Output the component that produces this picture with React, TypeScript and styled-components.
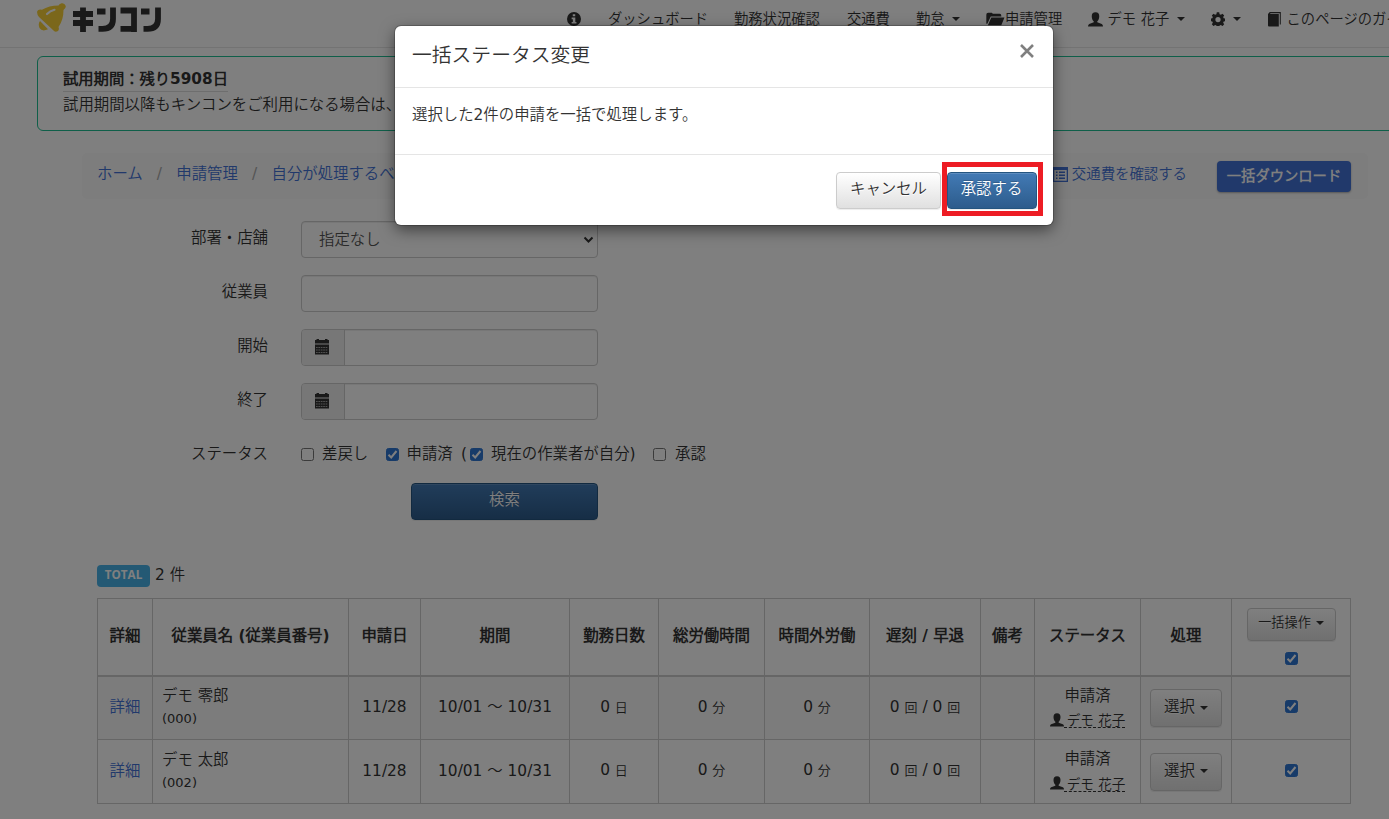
import React from 'react';
import styled, { createGlobalStyle, css } from 'styled-components';

const fonts = '"DejaVu Sans", "Noto Sans CJK JP DemiLight", "Noto Sans CJK JP", sans-serif';

const GlobalStyle = createGlobalStyle`
  * { box-sizing: border-box; }
  body { margin: 0; overflow: hidden; background: #fff; color: #333; font: 15.4px/22px ${fonts}; }
  button, select, input { font: inherit; color: inherit; }
`;

const Page = styled.div`
  position: relative;
  width: 1389px;
  height: 819px;
  overflow: hidden;
  background: #fff;
`;

const Navbar = styled.header`
  display: flex;
  height: 48px;
  border-bottom: 1px solid #e7e7e7;
  white-space: nowrap;
`;
const Brand = styled.div`
  flex: none;
  width: 530px;
  padding: 3px 0 0 36px;
`;
const NavItem = styled.a<{ $w: number; $indent?: number }>`
  flex: none;
  display: flex;
  align-items: center;
  width: ${(p) => p.$w}px;
  height: 38px;
  padding-left: ${(p) => p.$indent ?? 0}px;
  font-size: 14.3px;
  color: #333;
`;
const Glyph = styled.svg<{ $s?: number }>`
  flex: none;
  display: block;
  width: ${(p) => p.$s ?? 16}px;
  height: ${(p) => p.$s ?? 16}px;
  fill: currentColor;
`;
const Caret = styled.i`
  display: inline-block;
  margin-left: 7.5px;
  vertical-align: middle;
  border-top: 4px solid currentColor;
  border-left: 4px solid transparent;
  border-right: 4px solid transparent;
`;

const Trial = styled.section`
  width: 1400px;
  height: 75px;
  margin: 8px 0 0 37px;
  padding: 11px 25px;
  border: 1px solid #1fbf92;
  border-radius: 6px;
`;
const TrialTitle = styled.strong`
  display: table;
  height: 24px;
  border-bottom: 1px solid #ddd;
  font-size: 15.3px;
`;
const TrialText = styled.p`
  margin: 2px 0 0;
`;

const Crumbs = styled.nav`
  display: flex;
  align-items: center;
  width: 1286px;
  height: 46px;
  margin: 22px 0 0 82px;
  padding: 0 17px 4px 15px;
  border-radius: 5px;
  background: #fafafa;
  white-space: nowrap;
`;
const Link = styled.a`
  color: #4272d7;
`;
const Slash = styled.span`
  width: 33.6px;
  padding-left: 14px;
  color: #aaa;
`;
const CrumbActions = styled.div`
  display: flex;
  align-items: center;
  margin-left: auto;
`;
const ExpenseLink = styled(Link)`
  display: flex;
  align-items: center;
  gap: 4px;
  margin-right: 30px;
  font-size: 14.4px;
`;
const Download = styled.button`
  width: 134px;
  height: 31px;
  margin-top: 5px;
  padding: 0 0 1px;
  border: 0;
  border-radius: 4px;
  background: #4272d7;
  box-shadow: 0 1px 2px rgba(0, 0, 0, 0.3);
  color: #fff;
  font-size: 14.3px;
  font-weight: bold;
`;

const Form = styled.form`
  display: flex;
  flex-direction: column;
  gap: 17px;
  margin-top: 22px;
`;
const Row = styled.div`
  display: flex;
  height: 37px;
`;
const Label = styled.label`
  width: 268px;
  margin-right: 33px;
  padding-top: 6px;
  text-align: right;
`;
const field = css`
  border: 1px solid #ccc;
  border-radius: 4px;
  background: #fff;
  box-shadow: inset 0 1px 1px rgba(0, 0, 0, 0.075);
`;
const Select = styled.div`
  ${field}
  display: flex;
  align-items: center;
  justify-content: space-between;
  width: 297px;
  padding: 1px 3px 0 17px;
  color: #555;
`;
const SelectArrow = styled.svg`
  width: 11px;
  height: 8px;
  margin-bottom: 1px;
`;
const Input = styled.input`
  ${field}
  width: 297px;
`;
const DateGroup = styled.div`
  ${field}
  display: flex;
  width: 297px;
  overflow: hidden;
`;
const Addon = styled.span`
  display: flex;
  align-items: center;
  justify-content: center;
  width: 43px;
  padding: 0 2px 2px 0;
  border-right: 1px solid #ccc;
  background: #eee;
`;
const CheckLine = styled.div`
  display: flex;
  padding-top: 6px;
  white-space: nowrap;
`;
const Check = styled.label<{ $w: number; $gap?: number }>`
  display: flex;
  gap: ${(p) => p.$gap ?? 8}px;
  width: ${(p) => p.$w}px;
`;
const Paren = styled.span`
  width: 1px;
`;
const Box = styled.span<{ $on?: boolean; $top?: number }>`
  flex: none;
  display: inline-flex;
  width: 13px;
  height: 13px;
  margin-top: ${(p) => p.$top ?? 5}px;
  border: 1px solid ${(p) => (p.$on ? '#2f76d2' : '#767676')};
  border-radius: 2.5px;
  background: ${(p) => (p.$on ? '#2f76d2' : '#fff')};
`;

const primary = css`
  border: 1px solid #245580;
  border-radius: 4px;
  background: linear-gradient(#427ab5, #2d5c8c);
  box-shadow: inset 0 1px 0 rgba(255, 255, 255, 0.15), 0 1px 1px rgba(0, 0, 0, 0.075);
  color: #fff;
  text-shadow: 0 -1px 0 rgba(0, 0, 0, 0.2);
`;
const Search = styled.button`
  ${primary}
  width: 187px;
  height: 37px;
  margin: -8px 0 0 411px;
  padding: 0 0 3px;
`;

const Total = styled.div`
  display: flex;
  align-items: center;
  height: 22px;
  margin: 45px 0 11px 97px;
`;
const Count = styled.span`
  margin-top: -2px;
`;
const Badge = styled.span`
  width: 53px;
  height: 22px;
  margin-right: 5px;
  border-radius: 4px;
  background: #49b3e8;
  color: #fff;
  font: bold 11.7px/18px "Open Sans", ${fonts};
  text-align: center;
`;

const Table = styled.table`
  width: 1254px;
  margin-left: 97px;
  table-layout: fixed;
  border-collapse: separate;
  border-spacing: 0;
  border: solid #ccc;
  border-width: 1px 0 0 1px;
  white-space: nowrap;
`;
const Tr = styled.tr<{ $h: number; $striped?: boolean }>`
  height: ${(p) => p.$h}px;
  background: ${(p) => (p.$striped ? '#f9f9f9' : '#fff')};
`;
const cell = css`
  padding: 0;
  border: solid #ccc;
  border-width: 0 1px 1px 0;
  text-align: center;
  vertical-align: middle;
`;
const Th = styled.th<{ $lift?: number }>`
  ${cell}
  border-bottom-width: 2px;
  padding-bottom: ${(p) => p.$lift ?? 3}px;
`;
const Td = styled.td<{ $left?: boolean; $lift?: number }>`
  ${cell}
  padding-bottom: ${(p) => p.$lift ?? 2}px;
  ${(p) => p.$left && 'text-align: left; padding-left: 9px;'}
`;
const Small = styled.small`
  font-size: 13px;
`;
const Person = styled.div`
  display: flex;
  justify-content: center;
  align-items: center;
  height: 24px;
  margin-top: 1px;
  font-size: 13.6px;
`;
const PersonName = styled.span`
  height: 17px;
  padding-left: 3px;
  border-bottom: 1px dashed #333;
  line-height: 18px;
`;
const MenuButton = styled.button<{ $small?: boolean }>`
  width: ${(p) => (p.$small ? 89 : 72)}px;
  height: ${(p) => (p.$small ? 33 : 38)}px;
  padding: 0 0 ${(p) => (p.$small ? 3 : 2)}px;
  border: 1px solid #ccc;
  border-radius: 4px;
  background: linear-gradient(#fff, #e0e0e0);
  box-shadow: inset 0 1px 0 rgba(255, 255, 255, 0.15), 0 1px 1px rgba(0, 0, 0, 0.075);
  text-shadow: 0 1px 0 #fff;
  font-size: ${(p) => (p.$small ? 13.2 : 15.4)}px;
  font-weight: ${(p) => (p.$small ? 500 : 400)};
  ${Caret} { margin-left: 5px; }
`;
const HeadActions = styled.div`
  display: flex;
  flex-direction: column;
  align-items: center;
`;

const Backdrop = styled.div`
  position: absolute;
  inset: 0;
  display: flex;
  align-items: flex-start;
  padding: 26px 0 0 395px;
  background: rgba(0, 0, 0, 0.5);
`;
const Dialog = styled.section`
  width: 658px;
  height: 199px;
  border-radius: 6px;
  background: #fff;
  box-shadow: 0 0 0 1px rgba(0, 0, 0, 0.2), 0 5px 15px rgba(0, 0, 0, 0.5);
`;
const DialogHead = styled.div`
  display: flex;
  justify-content: space-between;
  height: 62px;
  padding: 18px 19px 0 17px;
  border-bottom: 1px solid #e5e5e5;
`;
const DialogTitle = styled.h4`
  margin: 0;
  font-size: 19.8px;
  font-weight: 400;
  line-height: 24px;
`;
const DialogBody = styled.div`
  height: 67px;
  padding: 16px 17px;
  border-bottom: 1px solid #e5e5e5;
`;
const DialogFoot = styled.div`
  display: flex;
  justify-content: flex-end;
  align-items: flex-start;
  padding: 7px 10px 0 0;
`;
const Cancel = styled(MenuButton)`
  width: 105px;
  height: 37px;
  margin: 10px 1px 0 0;
  padding-bottom: 3px;
`;
const Highlight = styled.div`
  width: 101px;
  height: 54px;
  border: 5px solid #ed1c24;
`;
const Approve = styled.button`
  ${primary}
  display: block;
  width: 90px;
  height: 37px;
  margin: 5px 0 0;
  padding: 0 1px 4px 0;
`;

const Logo = () => (
  <svg width="126" height="34" viewBox="0 0 126 34">
    <g fill="#f6cf36">
      <path d="M1.300 8 Q0.500 11 3 14 L17 27 Q19 30 22 28 Q23.500 26.500 22.500 24 Q27.500 17 27.500 7 Q30 5.500 29.800 3 Q28.500-.3 25.500.3 Q23 1 22.500 2.500 Q13 2.500 6 6.800 Q2.500 5.800 1.300 8Z" />
      <path d="M4 18 L12 26.300 Q6 29 3.500 25 Q1.800 21 4 18Z" />
    </g>
    <path d="M11 11 Q14 8 18.500 6.800" fill="none" stroke="#fff" strokeWidth="2.200" strokeLinecap="round" />
    <g fill="none" stroke="#333" strokeWidth="5.800">
      <path d="M37 11H57M37 20H57M47 4.500V29" />
      <path d="M61 8.500H69.500M77 4.500V16Q77 25.800 66.500 25.800H62.500" />
      <path d="M84.500 7.500H98V29M84.500 25.800H99" />
      <path d="M105 8.500H113.500M122 4.500V16Q122 25.800 111.500 25.800H107.500" />
    </g>
  </svg>
);

const InfoIcon = () => (
  <Glyph viewBox="0 0 16 16" $s={14}>
    <path fillRule="evenodd" d="M8 0a8 8 0 100 16A8 8 0 008 0zM6.600 2.600h2.800v2.300H6.600zM5.300 6.400h4.200v5h1.300v1.800H5.300v-1.800h1.400V8.200H5.300z" />
  </Glyph>
);
const FolderIcon = () => (
  <Glyph viewBox="0 0 18 18" $s={19}>
    <path d="M.3 13V4.500q0-2 1.700-2h3.500l1 1h6.500q1.500 0 1.500 2v.6H4.500L1.300 13zM5 7H17.500L14.500 14.500H1.800z" />
  </Glyph>
);
const UserIcon = ({ s = 15 }: { s?: number }) => (
  <Glyph viewBox="0 0 16 16" $s={s}>
    <path d="M8 .3c2.800 0 4 1.700 4 4.200 0 2.200-.8 4.400-2.100 5.400v1.100l4.800 1.800q1.300.6 1.300 2.700H0q0-2.100 1.300-2.700l4.800-1.800V9.900C4.800 8.900 4 6.700 4 4.500 4 2 5.200.3 8 .3z" />
  </Glyph>
);
const GearIcon = () => (
  <Glyph viewBox="0 0 16 16" $s={14}>
    <path fillRule="evenodd" d="M6.600.3h2.800l.4 2.200 1.500.6 1.800-1.200 2 2-1.200 1.800.6 1.500 2.200.4v2.800l-2.200.4-.6 1.500 1.200 1.800-2 2-1.800-1.200-1.500.6-.4 2.200H6.600l-.4-2.200-1.500-.6-1.800 1.200-2-2 1.200-1.800-.6-1.500-2.200-.4V7.600l2.200-.4.6-1.500L.9 3.900l2-2 1.800 1.200 1.500-.6zM8 5.600a3 3 0 100 6 3 3 0 000-6z" />
  </Glyph>
);
const BookIcon = () => (
  <Glyph viewBox="0 0 15 15" $s={15}>
    <path d="M1 2L2.800 0H13.800V12.500h-1V1.200H3.600L2.900 2h8.900v12.500H2q-1 0-1-1z" />
  </Glyph>
);
const CalendarIcon = () => (
  <Glyph viewBox="0 0 15 16" $s={16}>
    <path d="M.5 1h1.500V0h2.500v1h6V0H13v1h1.500v3.600H.5zM.5 5.400h14V15.500H.5z" />
    <path d="M1.500 8.500H13.500M1.500 11H13.500M1.500 13.500H13.500" stroke="#eee" strokeWidth=".6" strokeDasharray="1.700 .7" />
  </Glyph>
);
const ListIcon = () => (
  <Glyph viewBox="0 0 15 15" $s={15}>
    <path fillRule="evenodd" d="M0 0h15v15H0zM1.300 3v10.700h12.400V3zM3 4.500h1.500V6H3zm3 0h6V6H6zM3 7.500h1.500V9H3zm3 0h6V9H6zM3 10.500h1.500V12H3zm3 0h6V12H6z" />
  </Glyph>
);
const CloseIcon = () => (
  <svg width="14" height="14" viewBox="0 0 14 14">
    <path d="M1 1L13 13M13 1L1 13" stroke="#7f7f7f" strokeWidth="2.600" />
  </svg>
);
const Checkbox = ({ on, top }: { on?: boolean; top?: number }) => (
  <Box $on={on} $top={top}>
    {on && (
      <svg width="11" height="11" viewBox="0 0 11 11">
        <path d="M1.500 5.800L4.200 8.500L9.500 2" fill="none" stroke="#fff" strokeWidth="2" />
      </svg>
    )}
  </Box>
);

const columns = [55, 196, 72, 149, 89, 106, 105, 111, 54, 106, 91, 119];
const headings = ['詳細', '従業員名 (従業員番号)', '申請日', '期間', '勤務日数', '総労働時間', '時間外労働', '遅刻 / 早退', '備考', 'ステータス', '処理'];
const people = [
  { name: 'デモ 零郎', id: '(000)', height: 63, nameLift: 2 },
  { name: 'デモ 太郎', id: '(002)', height: 64, nameLift: 0 },
];

export default function App() {
  return (
    <Page>
      <GlobalStyle />
      <Navbar>
        <Brand><Logo /></Brand>
        <NavItem $w={78} $indent={37}><InfoIcon /></NavItem>
        <NavItem $w={126}>ダッシュボード</NavItem>
        <NavItem $w={113}>勤務状況確認</NavItem>
        <NavItem $w={69}>交通費</NavItem>
        <NavItem $w={70}>勤怠<Caret /></NavItem>
        <NavItem $w={102}><FolderIcon />申請管理</NavItem>
        <NavItem $w={123}><UserIcon /><span>&nbsp;デモ 花子</span><Caret /></NavItem>
        <NavItem $w={56}><GearIcon /><Caret /></NavItem>
        <NavItem $w={160}><BookIcon /><span>&nbsp;このページのガイド</span></NavItem>
      </Navbar>

      <Trial>
        <TrialTitle>試用期間：残り5908日</TrialTitle>
        <TrialText>試用期間以降もキンコンをご利用になる場合は、</TrialText>
      </Trial>

      <Crumbs>
        <Link>ホーム</Link><Slash>/</Slash>
        <Link>申請管理</Link><Slash>/</Slash>
        <Link>自分が処理するべき申請</Link>
        <CrumbActions>
          <ExpenseLink><ListIcon />交通費を確認する</ExpenseLink>
          <Download>一括ダウンロード</Download>
        </CrumbActions>
      </Crumbs>

      <Form>
        <Row>
          <Label>部署・店舗</Label>
          <Select>
            指定なし
            <SelectArrow viewBox="0 0 11 8"><path d="M1.500 1.500L5.500 5.500L9.500 1.500" fill="none" stroke="#333" strokeWidth="2" /></SelectArrow>
          </Select>
        </Row>
        <Row><Label>従業員</Label><Input /></Row>
        <Row><Label>開始</Label><DateGroup><Addon><CalendarIcon /></Addon></DateGroup></Row>
        <Row><Label>終了</Label><DateGroup><Addon><CalendarIcon /></Addon></DateGroup></Row>
        <Row>
          <Label>ステータス</Label>
          <CheckLine>
            <Check $w={84.5}><Checkbox />差戻し</Check>
            <Check $w={75.5}><Checkbox on />申請済</Check>
            <Check $w={192}><Paren>(</Paren><Checkbox on />現在の作業者が自分)</Check>
            <Check $w={60} $gap={9}><Checkbox />承認</Check>
          </CheckLine>
        </Row>
        <Search type="button">検索</Search>
      </Form>

      <Total><Badge>TOTAL</Badge><Count>2 件</Count></Total>

      <Table>
        <colgroup>{columns.map((w, i) => <col key={i} width={w} />)}</colgroup>
        <thead>
          <Tr $h={78}>
            {headings.map((h) => <Th key={h}>{h}</Th>)}
            <Th $lift={1}>
              <HeadActions>
                <MenuButton $small>一括操作<Caret /></MenuButton>
                <Checkbox on top={11} />
              </HeadActions>
            </Th>
          </Tr>
        </thead>
        <tbody>
          {people.map((p, i) => (
            <Tr key={p.id} $h={p.height} $striped={i === 0}>
              <Td><Link>詳細</Link></Td>
              <Td $left $lift={p.nameLift}>{p.name}<br /><Small>{p.id}</Small></Td>
              <Td>11/28</Td>
              <Td>10/01 ～ 10/31</Td>
              <Td>0 <Small>日</Small></Td>
              <Td>0 <Small>分</Small></Td>
              <Td>0 <Small>分</Small></Td>
              <Td>0 <Small>回</Small> / 0 <Small>回</Small></Td>
              <Td />
              <Td $lift={0}>申請済<Person><UserIcon s={14} /><PersonName>デモ 花子</PersonName></Person></Td>
              <Td $lift={0}><MenuButton>選択<Caret /></MenuButton></Td>
              <Td><Checkbox on top={3} /></Td>
            </Tr>
          ))}
        </tbody>
      </Table>

      <Backdrop>
        <Dialog>
          <DialogHead><DialogTitle>一括ステータス変更</DialogTitle><CloseIcon /></DialogHead>
          <DialogBody>選択した2件の申請を一括で処理します。</DialogBody>
          <DialogFoot>
            <Cancel>キャンセル</Cancel>
            <Highlight><Approve>承認する</Approve></Highlight>
          </DialogFoot>
        </Dialog>
      </Backdrop>
    </Page>
  );
}
